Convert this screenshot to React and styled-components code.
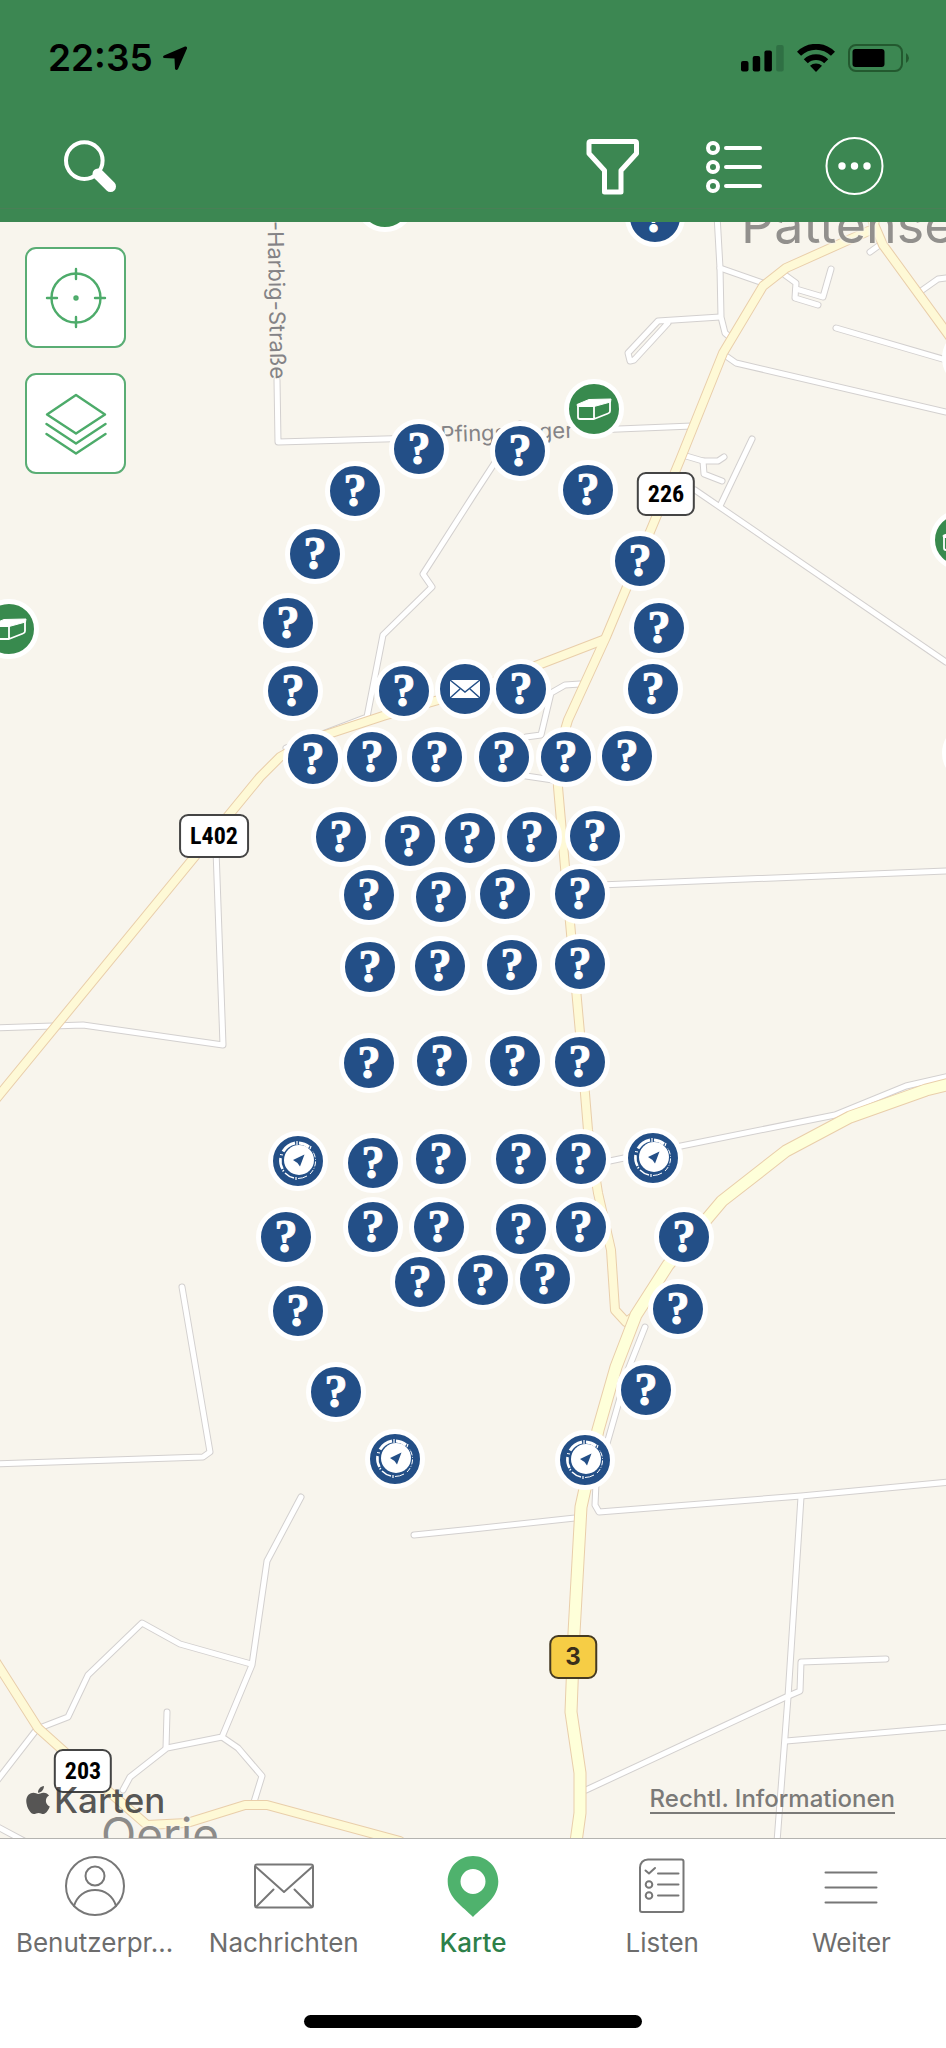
import React from 'react'
import styled, { createGlobalStyle, css } from 'styled-components'
import { FaApple } from 'react-icons/fa'

const MAP_WIDTH = 946
const MAP_HEIGHT = 1616

// all map coordinates are in screen space, the map starts below the header
const MAP_TOP = 222

const place = ([x, y]) => ({
  left: `${(x / MAP_WIDTH) * 100}%`,
  top: `${((y - MAP_TOP) / MAP_HEIGHT) * 100}%`
})

const mysteries = [
  [655, 217], [419, 449], [520, 451], [355, 491], [588, 490], [315, 554], [640, 561],
  [288, 623], [659, 628], [293, 691], [404, 691], [521, 689], [653, 689],
  [372, 757], [313, 759], [437, 757], [504, 757], [566, 757], [627, 756],
  [341, 837], [410, 841], [470, 838], [532, 837], [595, 836],
  [369, 895], [441, 897], [505, 894], [580, 894],
  [370, 967], [440, 966], [512, 965], [580, 964],
  [369, 1063], [442, 1061], [515, 1061], [580, 1062],
  [373, 1163], [441, 1159], [521, 1159], [581, 1159],
  [286, 1237], [373, 1227], [439, 1227], [521, 1229], [581, 1227], [684, 1237],
  [420, 1282], [483, 1280], [545, 1279],
  [298, 1311], [678, 1309], [336, 1392], [646, 1390]
]

const traditionals = [[385, 202], [594, 409], [9, 629], [960, 540]]
const virtuals = [[298, 1161], [653, 1158], [395, 1459], [585, 1460]]
const letterbox = [465, 689]
const blanks = [[972, 358], [972, 753]]

const smallRoads = [
  'M277 380L278 442L419 438',
  'M594 430L692 426',
  'M520 424L473 496L423 574L432 587L383 635L367 717L325 733L286 748',
  'M717 215L720 268L721 317L725 333L731 338',
  'M720 268L763 283',
  'M720 317L658 321L628 353L630 361L634 360L668 323',
  'M785 275L796 283L795 298L818 305',
  'M796 289L823 297L831 269',
  'M836 328L946 360',
  'M726 356L736 363L946 412',
  'M870 252L881 244',
  'M921 291L938 279L946 278',
  'M686 456L703 461L718 461L724 457',
  'M703 461L704 474L722 481',
  'M752 439L720 506',
  'M695 490L946 662',
  'M580 684L565 685L551 693L541 735L526 737',
  'M526 776L553 780',
  'M600 885L946 871',
  'M216 850L223 1045L83 1025L-4 1028',
  'M605 1162L681 1146L835 1115L906 1086L950 1076',
  'M182 1287L210 1452L203 1457L-4 1464',
  'M301 1497L267 1561L252 1665L222 1737L167 1748L130 1777L123 1790',
  'M251 1664L180 1644L142 1623L88 1675L68 1717L37 1729L-4 1782',
  'M167 1712L166 1748',
  'M222 1737L238 1748L262 1776L254 1802',
  'M-4 1826L26 1842',
  'M414 1535L473 1529L575 1518',
  'M645 1327L628 1370L608 1440L596 1483L595 1505L599 1512L801 1496L950 1482',
  'M801 1497L788 1697L777 1842',
  'M586 1790L786 1697L800 1691L801 1662L886 1659',
  'M786 1741L950 1727'
]

const mediumRoads = [
  'M876 215L873 229L786 268L763 286L723 353L680 460L606 637L568 720L557 757L558 787L565 867L580 1033L588 1130L598 1193L611 1250L615 1310L626 1322L636 1315',
  'M870 215L883 245L950 337',
  'M603 640L538 665L473 690L383 716L310 740L280 757L260 777L-4 1099',
  'M-4 1662L38 1728L115 1797L147 1825L187 1823L245 1805L267 1805L400 1841'
]

const federalRoads = [
  'M950 1084L926 1090L850 1117L786 1151L722 1201L668 1265L636 1315L616 1367L598 1430L581 1507L574 1633L571 1712L580 1773L580 1813L576 1842'
]

const RoadLayer = ({ roads, width, color, casing }) => (
  <g fill="none" strokeLinecap="round" strokeLinejoin="round">
    {roads.map(d => <path key={d} d={d} stroke={casing} strokeWidth={width} />)}
    {roads.map(d => <path key={d} d={d} stroke={color} strokeWidth={width - 2} />)}
  </g>
)

const Roads = () => (
  <RoadsSvg viewBox={`0 ${MAP_TOP} ${MAP_WIDTH} ${MAP_HEIGHT}`} preserveAspectRatio="none" aria-hidden="true">
    <RoadLayer roads={smallRoads} width={7} color="#ffffff" casing="#d3d0cf" />
    <RoadLayer roads={mediumRoads} width={10} color="#fef9d6" casing="#e9ceaa" />
    <RoadLayer roads={federalRoads} width={13} color="#feffd9" casing="#e9ceaa" />
  </RoadsSvg>
)

const Mystery = ({ at }) => (
  <Pin style={place(at)} aria-label="Mystery">
    <QuestionMark>?</QuestionMark>
  </Pin>
)

const Traditional = ({ at }) => (
  <Pin style={place(at)} color="#388a4e" aria-label="Traditional">
    <svg width="50" height="50" viewBox="-25 -25 50 50" fill="none" stroke="#fff" strokeWidth="1.800" strokeLinejoin="round">
      <path d="M-16 -3V8Q-16 10 -14 10H0L14 4.500Q16 4 16 2V-8M0 -3V10" />
      <path d="M-17 -4.500L-5 -9.500L17 -10L16.500 -7L0 -2.500H-16.500Z" fill="#fff" strokeWidth="1" />
    </svg>
  </Pin>
)

const Virtual = ({ at }) => (
  <Pin style={place(at)} aria-label="EarthCache">
    <svg width="50" height="50" viewBox="-25 -25 50 50">
      <g fill="none" stroke="#fff">
        <path d="M-3 -18A18 18 0 0 0 -15 -9.500" strokeWidth="3" />
        <path d="M1 -18A18 18 0 0 1 11 -14" strokeWidth="3" />
        <path d="M-17.500 -3A18 18 0 0 0 -15.500 8" strokeWidth="2.500" />
        <path d="M-13 12A18 18 0 0 0 -4 17" strokeWidth="1.500" />
        <path d="M0 17.500A18 18 0 0 0 9 15" strokeWidth="1" />
        <path d="M12 13A18 18 0 0 0 14.500 -10" strokeWidth="1" strokeDasharray="5 1.500 1 1.500" />
        <path d="M-1 -20V-16M13 -15L12 -12M-18 -6.500L-15 -6M-15.500 10.500L-14 9M-2 16V19" strokeWidth="1.200" />
      </g>
      <circle cx="1" cy="-1" r="15" fill="#fff" />
      <path d="M6.500 -6.500L2 5.500L-0.500 2L-5 -1Z" fill="#234f87" />
    </svg>
  </Pin>
)

const Letterbox = ({ at }) => (
  <Pin style={place(at)} aria-label="Letterbox">
    <svg width="50" height="50" viewBox="-25 -25 50 50">
      <path d="M-15 -9H15V9H-15Z" fill="#fff" />
      <path d="M-15 -9L0 3L15 -9M-15 9L-5 0M15 9L5 0" fill="none" stroke="#234f87" strokeWidth="1.500" />
    </svg>
  </Pin>
)

const StatusIcons = () => (
  <StatusGroup>
    <svg width="43" height="28" viewBox="0 0 43 28">
      <rect x="0" y="17" width="7.500" height="10.500" rx="2" />
      <rect x="11.700" y="12" width="7.500" height="15.500" rx="2" />
      <rect x="23.400" y="6.500" width="7.500" height="21" rx="2" />
      <rect x="35.200" y="1" width="7.500" height="26.500" rx="2" fill="#2f7044" />
    </svg>
    <svg width="38" height="28" viewBox="0 0 38 28">
      <path d="M19 28L13 21.800A8.800 8.800 0 0 1 25 21.800Z" />
      <path d="M8.800 17.200A14.600 14.600 0 0 1 29.200 17.200M2 9.800A24 24 0 0 1 36 9.800" fill="none" stroke="#000" strokeWidth="5.800" />
    </svg>
    <svg width="62" height="28" viewBox="0 0 62 28">
      <rect x="1" y="1" width="53" height="26" rx="7" fill="none" stroke="#23592f" strokeWidth="2" />
      <rect x="4.500" y="5" width="32" height="18" rx="3" />
      <path d="M58 9Q61 11 61 14T58 19Z" fill="#23592f" />
    </svg>
  </StatusGroup>
)

const SearchIcon = () => (
  <svg width="60" height="60" viewBox="0 0 60 60" fill="none" stroke="#fff">
    <circle cx="24.300" cy="24.600" r="18.300" strokeWidth="4" />
    <path d="M38 38L50.500 50.500" strokeWidth="11" strokeLinecap="round" />
    <path d="M35 37L39 41" strokeWidth="8" />
  </svg>
)

const FilterIcon = () => (
  <svg width="60" height="60" viewBox="0 0 60 60" fill="none" stroke="#fff" strokeWidth="5" strokeLinejoin="round">
    <path d="M7 5.500H51Q52.500 5.500 52.500 7V17.500L37 34.500V56H20.500V34.500L5 17.500V7Q5 5.500 7 5.500Z" />
  </svg>
)

const ListIcon = () => (
  <svg width="60" height="60" viewBox="0 0 60 60" fill="none" stroke="#fff" strokeWidth="4" strokeLinecap="round">
    {[12, 31, 50].map(y => (
      <g key={y}>
        <circle cx="9" cy={y} r="5" />
        <path d={`M22 ${y}H56`} />
      </g>
    ))}
  </svg>
)

const MoreIcon = () => (
  <svg width="60" height="60" viewBox="0 0 60 60" fill="#fff">
    <circle cx="30.500" cy="30" r="28" fill="none" stroke="#fff" strokeWidth="2" />
    <circle cx="18" cy="30" r="3.700" />
    <circle cx="30.500" cy="30" r="3.700" />
    <circle cx="43" cy="30" r="3.700" />
  </svg>
)

const TargetIcon = () => (
  <svg width="62" height="62" viewBox="-31 -31 62 62" fill="none" stroke="#4dab6a" strokeWidth="2.400" strokeLinecap="round">
    <circle r="24.500" />
    <circle r="1.500" />
    <path d="M-29 0H-19M29 0H19M0 -29V-19M0 29V19" />
  </svg>
)

const LayersIcon = () => (
  <svg width="62" height="62" viewBox="-31 -31 62 62" fill="none" stroke="#4dab6a" strokeWidth="2.400" strokeLinecap="round" strokeLinejoin="round">
    <path d="M0 -29L29 -9.500L0 9.500L-29 -9.500Z" />
    <path d="M-29.500 0L0 19.500L29.500 0M-29.500 10L0 29.500L29.500 10" />
  </svg>
)

const ProfileIcon = () => (
  <TabSvg viewBox="0 0 60 60">
    <circle cx="30" cy="30" r="29" />
    <circle cx="30" cy="20" r="9.500" />
    <path d="M9 50C12 40 20 34 30 34S48 40 51 50" />
  </TabSvg>
)

const MailIcon = () => (
  <TabSvg viewBox="0 0 60 60">
    <rect x="1" y="8.500" width="58" height="43" rx="2" />
    <path d="M2 11L30 36L58 11M2 51L19.500 33.500M58 51L40.500 33.500" />
  </TabSvg>
)

const MapPinIcon = () => (
  <TabSvg viewBox="0 0 60 60">
    <path
      d="M30 0C43.800 0 55.300 11 55.300 25.500C55.300 42 40 50.500 30 61C20 50.500 4.700 42 4.700 25.500C4.700 11 16.200 0 30 0ZM30 13A12.500 12.500 0 1 0 30 38A12.500 12.500 0 1 0 30 13Z"
      fill="#4fb26d"
      stroke="none"
    />
  </TabSvg>
)

const ListsIcon = () => (
  <TabSvg viewBox="0 0 60 60">
    <path d="M16 3.500H49.500Q51.500 3.500 51.500 5.500V54Q51.500 56 49.500 56H10Q8 56 8 54V11.500Q8.500 4 16 3.500Z" />
    <path d="M13.500 14.500L17 17.500L23 12" />
    <circle cx="17" cy="28.500" r="3.300" />
    <circle cx="17" cy="39.500" r="3.300" />
    <path d="M26 17.500H46.500M26 28.500H46.500M26 39.500H46.500" />
  </TabSvg>
)

const MenuIcon = () => (
  <TabSvg viewBox="0 0 60 60">
    <path d="M4.500 16.500H55.500M4.500 31.500H55.500M4.500 46.500H55.500" />
  </TabSvg>
)

const tabs = [
  { label: 'Benutzerpr...', Icon: ProfileIcon },
  { label: 'Nachrichten', Icon: MailIcon },
  { label: 'Karte', Icon: MapPinIcon, active: true },
  { label: 'Listen', Icon: ListsIcon },
  { label: 'Weiter', Icon: MenuIcon }
]

const App = () => (
  <Screen>
    <GlobalStyle />
    <Header>
      <StatusBar>
        <Clock>
          22:35
          <svg width="26" height="26" viewBox="0 0 26 26">
            <path d="M2 10.500L23 1.500Q25.500 1 25 3.500L16 24Q14.500 26 13 24L12.500 13.500L2 13Q0 12 2 10.500Z" />
          </svg>
        </Clock>
        <StatusIcons />
      </StatusBar>
      <Toolbar>
        <ToolButton aria-label="Suchen"><SearchIcon /></ToolButton>
        <ToolGroup>
          <ToolButton aria-label="Filter"><FilterIcon /></ToolButton>
          <ToolButton aria-label="Liste"><ListIcon /></ToolButton>
          <ToolButton aria-label="Mehr"><MoreIcon /></ToolButton>
        </ToolGroup>
      </Toolbar>
    </Header>
    <MapArea>
      <Roads />
      <MapLabel style={place([741, 225])} size="large" anchor="left">Pattensen</MapLabel>
      <MapLabel style={place([160, 1834])} size="medium">Oerie</MapLabel>
      <MapLabel style={place([507, 432])} angle={-2}>Pfingstanger</MapLabel>
      <MapLabel style={place([277, 300])} angle={89}>-Harbig-Straße</MapLabel>
      <Shield style={place([666, 494])}>226</Shield>
      <Shield style={place([214, 836])}>L402</Shield>
      <Shield style={place([83, 1771])}>203</Shield>
      <Shield style={place([573, 1657])} federal>3</Shield>
      {blanks.map(at => <Pin key={at} style={place(at)} color="#fff" aria-label="Cache" />)}
      {traditionals.map(at => <Traditional key={at} at={at} />)}
      {mysteries.map(at => <Mystery key={at} at={at} />)}
      {virtuals.map(at => <Virtual key={at} at={at} />)}
      <Letterbox at={letterbox} />
      <MapControls>
        <ControlButton aria-label="Standort"><TargetIcon /></ControlButton>
        <ControlButton aria-label="Ebenen"><LayersIcon /></ControlButton>
      </MapControls>
      <MapFooter>
        <Brand><FaApple size={32} />Karten</Brand>
        <LegalLink href="#legal">Rechtl. Informationen</LegalLink>
      </MapFooter>
    </MapArea>
    <BottomBar>
      <Tabs>
        {tabs.map(({ label, Icon, active }) => (
          <Tab key={label} href="#" $active={active}>
            <Icon />
            {label}
          </Tab>
        ))}
      </Tabs>
      <HomeIndicator />
    </BottomBar>
  </Screen>
)

const GlobalStyle = createGlobalStyle`
  * {
    box-sizing: border-box;
  }
  body {
    margin: 0;
    font-family: Inter, 'Liberation Sans', sans-serif;
  }
  button {
    padding: 0;
    border: 0;
    background: none;
    font: inherit;
  }
  svg {
    display: block;
    flex-shrink: 0;
  }
`

const Screen = styled.div`
  display: flex;
  flex-direction: column;
  min-height: 100vh;
  background: #fff;
`

const Header = styled.header`
  padding-bottom: 13px;
  background: #3c8752;
`

const StatusBar = styled.div`
  display: flex;
  align-items: center;
  justify-content: space-between;
  height: 116px;
  padding: 0 36px 0 48px;
`

const Clock = styled.div`
  display: flex;
  align-items: center;
  gap: 9px;
  font-size: 37px;
  line-height: 44px;
  font-weight: 600;
`

const StatusGroup = styled.div`
  display: flex;
  align-items: center;
  gap: 13px;
`

const Toolbar = styled.div`
  display: flex;
  align-items: center;
  justify-content: space-between;
  padding: 20px 62px 12px 60px;
  border-bottom: 1px solid #4a7f56;
`

const ToolGroup = styled.div`
  display: flex;
  gap: 60px;
`

const ToolButton = styled.button`
  width: 60px;
  height: 60px;
`

const MapArea = styled.main`
  position: relative;
  flex: 1;
  min-height: 800px;
  overflow: hidden;
  background: #f8f5ed;
`

const RoadsSvg = styled.svg`
  position: absolute;
  inset: 0;
  width: 100%;
  height: 100%;
`

const labelSizes = {
  large: css`
    font-size: 52px;
    color: #92908d;
  `,
  medium: css`
    font-size: 46px;
    color: #8c8b89;
  `,
  small: css`
    font-size: 22px;
    color: #848386;
  `
}

const MapLabel = styled.span.withConfig({
  shouldForwardProp: prop => !['size', 'anchor', 'angle'].includes(prop)
})`
  position: absolute;
  line-height: 1;
  white-space: nowrap;
  text-shadow: 0 0 3px #f8f5ed, 0 0 3px #f8f5ed, 0 0 3px #f8f5ed;
  transform: translate(${props => props.anchor === 'left' ? '0' : '-50%'}, -50%) rotate(${props => props.angle || 0}deg);
  ${props => labelSizes[props.size || 'small']}
`

const Shield = styled.span.withConfig({
  shouldForwardProp: prop => prop !== 'federal'
})`
  position: absolute;
  transform: translate(-50%, -50%);
  padding: 0 9px;
  border: 2px solid #444;
  border-radius: 9px;
  background: #fff;
  color: #000;
  font-family: 'Liberation Sans Narrow', 'Roboto Condensed', 'DejaVu Sans Condensed', sans-serif;
  font-size: 24px;
  line-height: 40px;
  font-weight: 700;
  ${props => props.federal && css`
    padding: 0 14px;
    border-color: #453a22;
    background: #f6cd45;
    color: #3a2f1a;
    font-family: Inter, sans-serif;
  `}
`

const Pin = styled.button`
  position: absolute;
  display: flex;
  align-items: center;
  justify-content: center;
  width: 60px;
  height: 60px;
  margin: -30px 0 0 -30px;
  border: 5px solid #fff;
  border-radius: 50%;
  background: ${props => props.color || '#234f87'};
`

const QuestionMark = styled.span`
  color: #fff;
  font-family: 'Liberation Serif', serif;
  font-size: 46px;
  line-height: 50px;
  font-weight: 700;
  -webkit-text-stroke: 1px #fff;
`

const MapControls = styled.div`
  position: absolute;
  top: 25px;
  left: 25px;
  display: flex;
  flex-direction: column;
  gap: 25px;
`

const ControlButton = styled.button`
  display: flex;
  align-items: center;
  justify-content: center;
  width: 101px;
  height: 101px;
  border: 2px solid #5aad74;
  border-radius: 11px;
  background: #fff;
`

const MapFooter = styled.div`
  position: absolute;
  right: 51px;
  bottom: 16px;
  left: 22px;
  display: flex;
  align-items: center;
  justify-content: space-between;
`

const Brand = styled.div`
  display: flex;
  align-items: center;
  color: rgba(50, 50, 50, 0.82);
  font-size: 35px;
  line-height: 44px;
  font-weight: 500;
`

const LegalLink = styled.a`
  border-bottom: 2px solid #7b7a78;
  color: #7b7a78;
  font-size: 24px;
  line-height: 26px;
  font-weight: 500;
  text-decoration: none;
`

const BottomBar = styled.footer`
  padding-bottom: 20px;
  border-top: 1px solid #b4b3b0;
  background: #fff;
`

const Tabs = styled.nav`
  display: grid;
  grid-template-columns: repeat(5, 1fr);
`

const Tab = styled.a`
  display: flex;
  flex-direction: column;
  align-items: center;
  gap: 12px;
  padding: 17px 0 57px;
  color: ${props => props.$active ? '#2d8049' : '#6d6d6d'};
  font-size: 26px;
  line-height: 30px;
  font-weight: ${props => props.$active ? 500 : 400};
  text-decoration: none;
`

const TabSvg = styled.svg`
  width: 60px;
  height: 60px;
  overflow: visible;
  fill: none;
  stroke: #777;
  stroke-width: 2;
  stroke-linecap: round;
  stroke-linejoin: round;
`

const HomeIndicator = styled.div`
  width: 338px;
  height: 13px;
  margin: 0 auto;
  border-radius: 7px;
  background: #000;
`

export default App
